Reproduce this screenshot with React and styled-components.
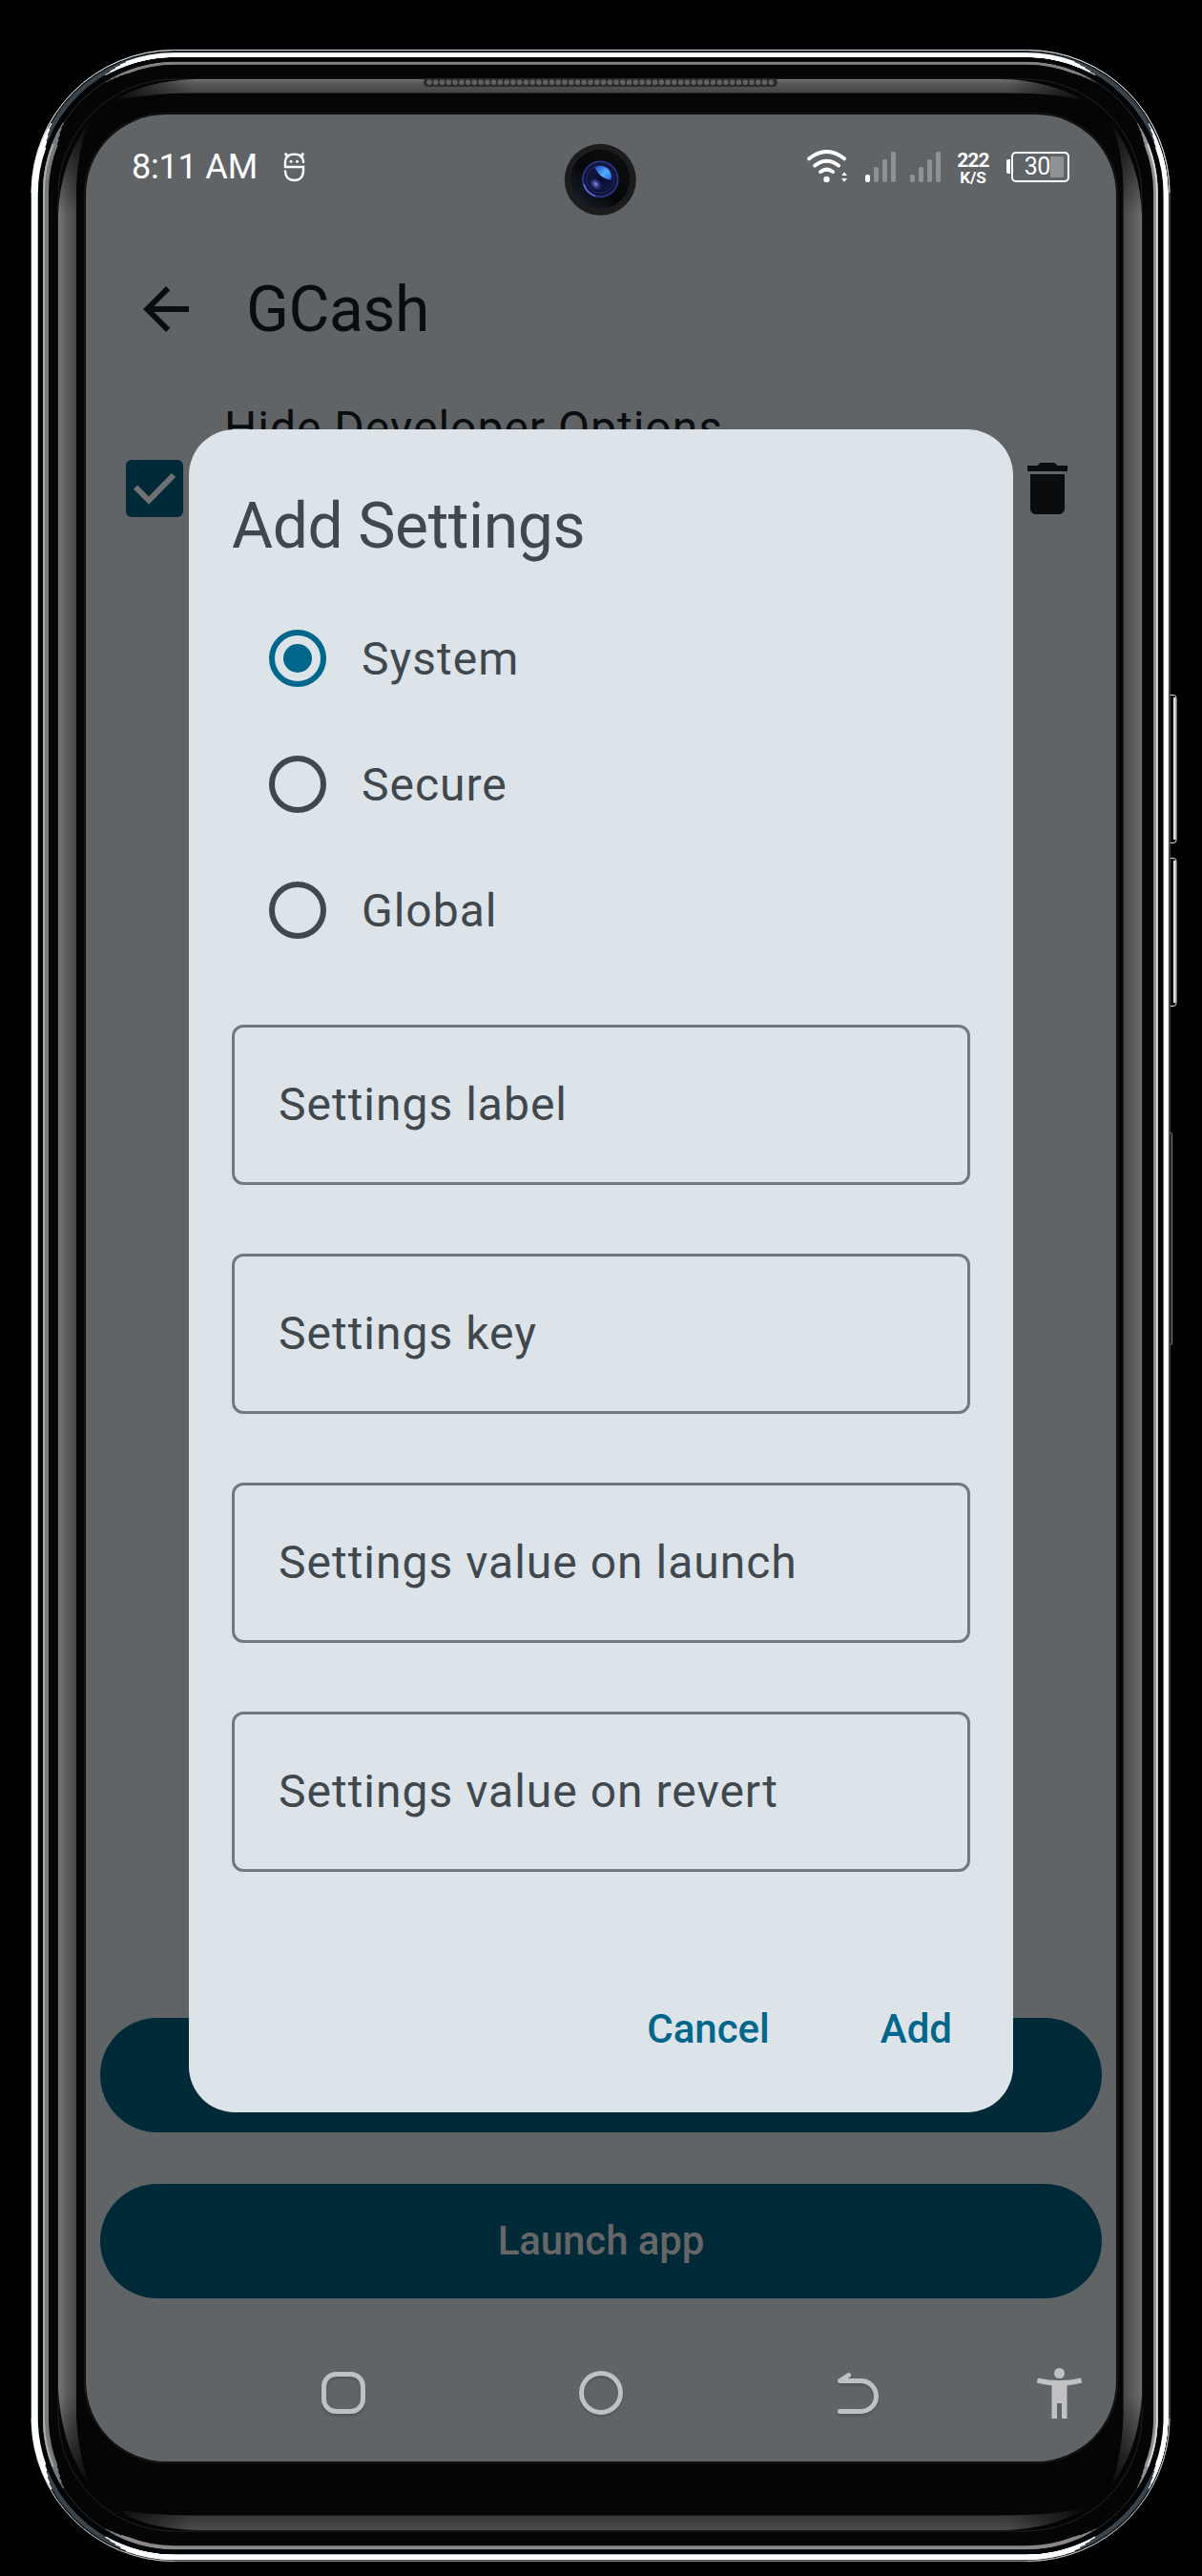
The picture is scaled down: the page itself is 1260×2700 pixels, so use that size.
import React, { useState } from "react";
import styled, { createGlobalStyle } from "styled-components";

const color = {
  screen: "#606467",
  ink: "#0a0c0e",
  dialog: "#dce3e9",
  text: "#41484d",
  outline: "#71787e",
  primary: "#00668b",
  primaryDim: "#002a38",
  onPrimaryDim: "#666666",
  nav: "#c0c1c3",
};

const GlobalStyle = createGlobalStyle`
  body { margin: 0; background: #000; }
  *, *::before, *::after { box-sizing: border-box; }
  svg { display: block; flex: none; }
  button { border: 0; margin: 0; padding: 0; background: none; font: inherit; color: inherit; letter-spacing: inherit; }
`;

const Page = styled.main`
  width: 1260px;
  height: 2700px;
  background: #000;
  overflow: hidden;
  font-family: Roboto, "Liberation Sans", sans-serif;
`;

const Phone = styled.div`
  position: relative;
  height: 100%;
  padding: 120px 90px;
`;

const Hardware = styled.svg`
  position: absolute;
  inset: 0;
`;

const Screen = styled.section`
  position: relative;
  display: flex;
  flex-direction: column;
  height: 2460px;
  border-radius: 84px;
  background: ${color.screen};
  overflow: hidden;
`;

const StatusBar = styled.header`
  display: flex;
  align-items: center;
  height: 108px;
  padding: 1px 49px 0 48px;
  color: #fff;
`;

const Clock = styled.span`
  margin: 1px 27px 0 0;
  font-size: 36px;
  line-height: 42px;
  letter-spacing: -0.2px;
`;

const StatusIcons = styled.div`
  display: flex;
  align-items: center;
  margin-left: auto;
`;

const Signals = styled.div`
  display: flex;
  gap: 15px;
  margin: 0 17px 0 18px;
`;

const NetSpeed = styled.div`
  display: flex;
  flex-direction: column;
  align-items: center;
  width: 34px;
  margin: 4px 18px 0 0;
  font-weight: 700;
`;

const SpeedValue = styled.span`
  font-size: 21px;
  line-height: 18px;
  letter-spacing: -0.8px;
`;

const SpeedUnit = styled.span`
  font-size: 17px;
  line-height: 18px;
`;

const Battery = styled.div`
  display: flex;
  align-items: center;
  gap: 1px;
`;

const BatteryNub = styled.span`
  width: 4px;
  height: 15px;
  border-radius: 2px 0 0 2px;
  background: #fff;
`;

const BatteryBody = styled.span`
  display: flex;
  align-items: center;
  justify-content: flex-end;
  width: 61px;
  height: 32px;
  padding-right: 4px;
  border: 2px solid #fff;
  border-radius: 5px;
  font-size: 25px;
  line-height: 28px;
  letter-spacing: -0.4px;
`;

const BatteryEmpty = styled.span`
  width: 14px;
  height: 22px;
  background: #8f9193;
  border-radius: 0 2px 2px 0;
`;

const Camera = styled.svg`
  position: absolute;
  left: 501px;
  top: 30px;
`;

const TopBar = styled.div`
  display: flex;
  align-items: center;
  gap: 48px;
  height: 192px;
  padding-left: 48px;
  color: ${color.ink};
`;

const TopTitle = styled.h1`
  margin: 1px 0 0;
  font-size: 66px;
  font-weight: 400;
  line-height: 84px;
  letter-spacing: -0.5px;
`;

const SettingRow = styled.div`
  display: flex;
  align-items: center;
  height: 184px;
  padding: 0 36px 0 42px;
  color: ${color.ink};
`;

const CheckBox = styled.span`
  display: grid;
  place-items: center;
  width: 60px;
  height: 60px;
  border-radius: 6px;
  background: ${color.primaryDim};
`;

const SettingLabel = styled.span`
  flex: 1;
  align-self: flex-start;
  margin: -7px 0 0 43px;
  font-size: 48px;
  line-height: 72px;
  letter-spacing: 1px;
`;

const Actions = styled.div`
  display: flex;
  flex-direction: column;
  gap: 54px;
  margin-top: auto;
  padding: 0 15px;
`;

const FilledButton = styled.button`
  height: 120px;
  border-radius: 60px;
  background: ${color.primaryDim};
  color: ${color.onPrimaryDim};
  font-size: 42px;
  font-weight: 500;
  line-height: 60px;
  letter-spacing: -0.1px;
`;

const NavBar = styled.nav`
  display: flex;
  align-items: center;
  height: 144px;
  margin: 27px 0 0;
  padding: 0 30px 0 239px;
  svg.soft { filter: drop-shadow(0 2px 1px rgba(0, 0, 0, 0.16)); }
`;

const NavSpace = styled.span`
  flex: 0 0 ${(p) => p.$w}px;
`;

const Dialog = styled.div`
  position: absolute;
  left: 108px;
  top: 330px;
  display: flex;
  flex-direction: column;
  width: 864px;
  height: 1764px;
  padding: 45px;
  border-radius: 48px;
  background: ${color.dialog};
  color: ${color.text};
`;

const DialogTitle = styled.h2`
  margin: 12px 0 0;
  font-size: 66px;
  font-weight: 400;
  line-height: 90px;
  letter-spacing: -0.4px;
`;

const RadioGroup = styled.div`
  display: flex;
  flex-direction: column;
  margin: 27px 0 54px;
  padding-left: 39px;
`;

const RadioRow = styled.button`
  display: flex;
  align-items: center;
  gap: 37px;
  height: 132px;
  font-size: 48px;
  line-height: 72px;
  letter-spacing: 1px;
  text-align: left;
`;

const RadioName = styled.span`
  margin-top: 2px;
`;

const RadioRing = styled.span`
  display: grid;
  place-items: center;
  width: 60px;
  height: 60px;
  border: 6px solid ${(p) => (p.$on ? color.primary : color.text)};
  border-radius: 50%;
  &::after {
    content: "";
    width: 30px;
    height: 30px;
    border-radius: 50%;
    background: ${(p) => (p.$on ? color.primary : "transparent")};
  }
`;

const Fields = styled.div`
  display: flex;
  flex-direction: column;
  gap: 72px;
`;

const Field = styled.div`
  display: flex;
  align-items: center;
  height: 168px;
  padding: 0 46px;
  border: 3px solid ${color.outline};
  border-radius: 12px;
  font-size: 48px;
  line-height: 72px;
  letter-spacing: 1px;
`;

const DialogActions = styled.div`
  display: flex;
  justify-content: flex-end;
  gap: 116px;
  margin-top: auto;
  padding: 0 19px 12px 0;
  color: ${color.primary};
  font-size: 42px;
  font-weight: 500;
  line-height: 60px;
`;

const rad = (d) => (d * Math.PI) / 180;

/* One straight side of a rounded rectangle that carries on `edge` degrees round both corners. */
function sidePath(side, { l, t, r, b, rad: k }, edge) {
  const c = k * Math.cos(rad(edge));
  const s = k * Math.sin(rad(edge));
  const arc = (x, y, sweep) => `A${k} ${k} 0 0 ${sweep} ${x} ${y}`;
  if (side === "left")
    return `M${l + k - c} ${b - k + s}${arc(l, b - k, 1)}V${t + k}${arc(l + k - c, t + k - s, 1)}`;
  if (side === "right")
    return `M${r - k + c} ${b - k + s}${arc(r, b - k, 0)}V${t + k}${arc(r - k + c, t + k - s, 0)}`;
  if (side === "top")
    return `M${l + k - s} ${t + k - c}${arc(l + k, t, 1)}H${r - k}${arc(r - k + s, t + k - c, 1)}`;
  return `M${l + k - s} ${b - k + c}${arc(l + k, b, 0)}H${r - k}${arc(r - k + s, b - k + c, 0)}`;
}

/* A highlight whose ends thin out towards the corners, against the outer (+1) or inner (-1) side. */
function Highlight({ side, box, width, stroke, reach, lean }) {
  const steps = [1, 0.8, 0.6, 0.4, 0.22];
  return steps.map((f, i) => {
    const d = (lean * (width * (1 - f))) / 2;
    const shifted = { l: box.l - d, t: box.t - d, r: box.r + d, b: box.b + d, rad: box.rad + d };
    return (
      <path key={f} d={sidePath(side, shifted, reach - 10 + i * 2.5)} stroke={stroke} strokeWidth={width * f} />
    );
  });
}

const chrome = { l: 36.5, t: 57.5, r: 1222, b: 2680.5, rad: 146 };
const inner = { l: 48, t: 66.5, r: 1211.3, b: 2670, rad: 135 };

function Frame() {
  return (
    <Hardware width="1260" height="2700" viewBox="0 0 1260 2700" fill="none">
      <defs>
        <linearGradient id="bandL"><stop stopColor="#777" /><stop offset=".25" stopColor="#5e5e5e" /><stop offset="1" stopColor="#282828" /></linearGradient>
        <linearGradient id="bandR"><stop stopColor="#303030" /><stop offset="1" stopColor="#6c6c6c" /></linearGradient>
        <linearGradient id="bandT" x2="0" y2="1"><stop stopColor="#707070" /><stop offset=".2" stopColor="#585858" /><stop offset="1" stopColor="#303030" /></linearGradient>
        <linearGradient id="bandB" x2="0" y2="1"><stop stopColor="#1b1b1b" /><stop offset=".3" stopColor="#353535" /><stop offset="1" stopColor="#4b4b4b" /></linearGradient>
        <linearGradient id="fadeV" gradientUnits="userSpaceOnUse" x1="0" y1="110" x2="0" y2="2625">
          <stop stopColor="#000" /><stop offset=".045" stopColor="#fff" /><stop offset=".955" stopColor="#fff" /><stop offset="1" stopColor="#000" />
        </linearGradient>
        <linearGradient id="fadeH" gradientUnits="userSpaceOnUse" x1="105" y1="0" x2="1153" y2="0">
          <stop stopColor="#000" /><stop offset=".09" stopColor="#fff" /><stop offset=".91" stopColor="#fff" /><stop offset="1" stopColor="#000" />
        </linearGradient>
        <mask id="maskV" maskUnits="userSpaceOnUse" x="0" y="0" width="1260" height="2700"><rect width="1260" height="2700" fill="url(#fadeV)" /></mask>
        <mask id="maskH" maskUnits="userSpaceOnUse" x="0" y="0" width="1260" height="2700"><rect width="1260" height="2700" fill="url(#fadeH)" /></mask>
      </defs>

      {[[728, 155], [899, 155]].map(([y, h]) => (
        <g key={y}>
          <rect x="1221" y={y + 0.5} width="12" height={h} rx="3" fill="#080808" stroke="#d8d8d8" />
          <rect x="1230" y={y + 3} width="2.600" height={h - 6} fill="#dedede" />
        </g>
      ))}
      <rect x="1221" y="1187.500" width="7.500" height="222" rx="1" fill="#050505" stroke="#8d8585" />

      <rect x="32.500" y="52" width="1194" height="2633" rx="150" fill="#050505" />
      <rect x="37" y="56.500" width="1185" height="2624" rx="145.500" stroke="#3a434a" strokeWidth="5" />
      <rect x="34.500" y="54" width="1190" height="2629" rx="148" stroke="#1a2024" />
      <rect x="33" y="52.500" width="1193" height="2632" rx="149.500" stroke="#7a8388" />
      <path d="M33 202A149.500 149.500 0 0 1 182.500 52.500H1076.500A149.500 149.500 0 0 1 1226 202" stroke="#dfe2e4" />
      <path d="M33 2535A149.500 149.500 0 0 0 182.500 2684.500M1076.500 2684.500A149.500 149.500 0 0 0 1226 2535" stroke="#b4babd" />
      <rect x="42" y="61.500" width="1175" height="2614" rx="141" stroke="#010508" strokeWidth="5" />
      <Highlight side="left" box={chrome} width={6.5} stroke="#fff" reach={30} lean={1} />
      <Highlight side="right" box={chrome} width={4.8} stroke="#fff" reach={30} lean={1} />
      <Highlight side="top" box={chrome} width={4.4} stroke="#fff" reach={30} lean={-1} />
      <Highlight side="bottom" box={chrome} width={5.4} stroke="#fff" reach={30} lean={-1} />

      <rect x="45.500" y="65" width="1168" height="2607" rx="137" stroke="#2b2d2e" />
      <Highlight side="left" box={inner} width={6} stroke="#767a7b" reach={32} lean={1} />
      <path d={sidePath("left", { ...inner, l: 46 }, 22)} stroke="#a8abac" strokeWidth="2" />
      <Highlight side="right" box={inner} width={4.5} stroke="#948f90" reach={32} lean={1} />
      <path d={sidePath("right", { ...inner, r: 1212.8 }, 22)} stroke="#d8dadb" strokeWidth="1.800" />
      <Highlight side="top" box={inner} width={2.6} stroke="#858283" reach={32} lean={1} />
      <Highlight side="bottom" box={inner} width={3.6} stroke="#8b8788" reach={32} lean={1} />

      <rect x="61" y="83" width="1136" height="2570" rx="122" stroke="#222" />
      <g mask="url(#maskV)">
        <path fill="url(#bandL)" d="M93 128Q62 172 61 227V2503Q64 2565 93 2603Q81 2568 80 2530V197Q81 160 93 128Z" />
        <path fill="url(#bandR)" d="M1165 128Q1196 172 1197 227V2510Q1194 2567 1165 2605Q1177 2570 1177.500 2530V197Q1177 160 1165 128Z" />
      </g>
      <g mask="url(#maskH)">
        <path fill="url(#bandT)" d="M119 106Q150 85 204 83H1050Q1100 84 1138 106Q1105 97 1050 97.500H200Q152 98 119 106Z" />
        <path fill="url(#bandB)" d="M123 2630Q150 2651 210 2652H1050Q1105 2651 1136 2629Q1105 2636 1050 2636.500H200Q152 2636 123 2630Z" />
      </g>
      <rect x="88.500" y="118.500" width="1083" height="2463" rx="86" stroke="#171717" strokeWidth="1.500" />

      <rect x="444" y="82" width="371" height="9" rx="4.500" fill="#2b2b2b" />
      {Array.from({ length: 54 }, (_, i) => (
        <circle key={i} cx={450 + i * 6.76} cy="86.200" r="2.700" fill="#626262" />
      ))}
    </Hardware>
  );
}

function FrontCamera() {
  return (
    <Camera width="76" height="76" viewBox="0 0 76 76" fill="none">
      <defs>
        <radialGradient id="lens"><stop stopColor="#080a2c" /><stop offset=".6" stopColor="#11143e" /><stop offset=".82" stopColor="#0a0d26" /><stop offset="1" stopColor="#232c6c" /></radialGradient>
        <linearGradient id="barrel" x1="1" y1="0" x2="0" y2="1"><stop stopColor="#101010" /><stop offset=".55" stopColor="#06070a" /><stop offset="1" stopColor="#1b2530" /></linearGradient>
        <linearGradient id="glint" x1="0" y1="0" x2="1" y2="1"><stop stopColor="#2a43bd" /><stop offset=".55" stopColor="#4cadff" /><stop offset="1" stopColor="#2e66d6" /></linearGradient>
        <radialGradient id="low"><stop stopColor="#8d93ea" /><stop offset="1" stopColor="#2b2f86" stopOpacity="0" /></radialGradient>
      </defs>
      <circle cx="38.300" cy="38.300" r="37.500" fill="#1c1c1d" />
      <circle cx="38.300" cy="37.800" r="31" fill="url(#barrel)" />
      <circle cx="38.300" cy="37.800" r="18.600" fill="url(#lens)" stroke="#303c91" strokeWidth="1.200" />
      <circle cx="38.300" cy="37.800" r="14.500" stroke="#2b3588" strokeWidth=".9" />
      <path d="M21 43A18.400 18.400 0 0 0 33 55.500" stroke="#5664d8" strokeWidth="1.800" />
      <ellipse cx="33.500" cy="43" rx="8" ry="6" transform="rotate(45 33.5 43)" fill="url(#low)" />
      <path d="M32 25.500Q42 21.500 48 29Q51 34 49.500 38.500Q43 38 38 33.500Q35 30 32 25.500Z" fill="url(#glint)" />
    </Camera>
  );
}

function BotIcon() {
  return (
    <svg width="24" height="32" viewBox="0 0 24 32" fill="none" stroke="#fff" strokeWidth="2.400" strokeLinecap="round">
      <path d="M2.600 2.600 4.600 5M20.400 2.600 18.400 5" strokeWidth="3" />
      <path d="M21 11V10Q20.500 2.600 11.500 2.600T2 10V16H21V20Q20.500 30 11.500 30T2 20.500" />
      <circle cx="8" cy="10.300" r="1.500" fill="#fff" stroke="none" />
      <circle cx="14.500" cy="10.300" r="1.500" fill="#fff" stroke="none" />
    </svg>
  );
}

function WifiIcon() {
  return (
    <svg width="43" height="35" viewBox="0 0 43 35" fill="none" stroke="#fff" strokeWidth="4" strokeLinecap="round">
      <path d="M2.200 9.300Q20.500 -5.200 39 9.300M8.200 16.500Q20.500 7 33 16.500M14.200 23Q20.500 18.300 27 23" />
      <circle cx="20.500" cy="31" r="3.200" fill="#fff" stroke="none" />
      <path d="M36.200 27 39 23.600 42 27ZM36.200 30 39 33.800 42 30Z" fill="#fff" stroke="none" />
    </svg>
  );
}

function SignalIcon({ level }) {
  return (
    <svg width="32" height="32" viewBox="0 0 32 32">
      {[8, 16, 24, 32].map((h, i) => (
        <rect key={h} x={i * 9} y={32 - h} width="5" height={h} rx="2" fill={i < level ? "#fff" : "#8f9294"} />
      ))}
    </svg>
  );
}

const OPTIONS = ["System", "Secure", "Global"];
const FIELDS = ["Settings label", "Settings key", "Settings value on launch", "Settings value on revert"];

export default function App() {
  const [scope, setScope] = useState("System");
  return (
    <Page>
      <GlobalStyle />
      <Phone>
        <Frame />
        <Screen>
          <StatusBar>
            <Clock>8:11 AM</Clock>
            <BotIcon />
            <StatusIcons>
              <WifiIcon />
              <Signals>
                <SignalIcon level={1} />
                <SignalIcon level={0} />
              </Signals>
              <NetSpeed>
                <SpeedValue>222</SpeedValue>
                <SpeedUnit>K/S</SpeedUnit>
              </NetSpeed>
              <Battery>
                <BatteryNub />
                <BatteryBody>
                  30
                  <BatteryEmpty />
                </BatteryBody>
              </Battery>
            </StatusIcons>
          </StatusBar>

          <TopBar>
            <svg width="72" height="72" viewBox="0 0 24 24" fill={color.ink}>
              <path d="M20 11H7.830l5.590-5.590L12 4l-8 8 8 8 1.410-1.410L7.830 13H20v-2z" />
            </svg>
            <TopTitle>GCash</TopTitle>
          </TopBar>

          <SettingRow>
            <CheckBox>
              <svg width="60" height="60" viewBox="0 0 60 60" fill="none" stroke="#707172" strokeWidth="6">
                <path d="M10 28.500 24 42.500 50 16" />
              </svg>
            </CheckBox>
            <SettingLabel>Hide Developer Options</SettingLabel>
            <svg width="72" height="72" viewBox="0 0 24 24" fill={color.ink}>
              <path d="M6 19c0 1.100.9 2 2 2h8c1.100 0 2-.9 2-2V7H6v12zM19 4h-3.500l-1-1h-5l-1 1H5v2h14V4z" />
            </svg>
          </SettingRow>

          <Actions>
            <FilledButton aria-label="Add" />
            <FilledButton>Launch app</FilledButton>
          </Actions>

          <NavBar>
            <svg className="soft" width="60" height="60" viewBox="0 0 60 60" fill="none" stroke={color.nav} strokeWidth="5">
              <rect x="10.500" y="10.500" width="41" height="39" rx="13" />
            </svg>
            <NavSpace $w={211} />
            <svg className="soft" width="60" height="60" viewBox="0 0 60 60" fill="none" stroke={color.nav} strokeWidth="5">
              <circle cx="30" cy="30" r="20.500" />
            </svg>
            <NavSpace $w={209} />
            <svg className="soft" width="60" height="60" viewBox="0 0 60 60" fill="none" stroke={color.nav} strokeWidth="5" strokeLinecap="round" strokeLinejoin="round">
              <path d="M20.500 11.500 11.500 17.500H33.500A16 16 0 0 1 33.500 49.500H11.500" />
            </svg>
            <NavSpace $w={151} />
            <svg width="60" height="60" viewBox="0 0 60 60" fill={color.nav}>
              <circle cx="30.500" cy="9.500" r="5.500" />
              <path d="M8 14.500Q30.500 19.500 53 14.500L54.200 19.500Q46 21.500 38.500 22.300V57H33V41H28V57H22.500V22.300Q15 21.500 6.800 19.500Z" />
            </svg>
          </NavBar>

          <Dialog role="dialog" aria-label="Add Settings">
            <DialogTitle>Add Settings</DialogTitle>
            <RadioGroup>
              {OPTIONS.map((name) => (
                <RadioRow key={name} onClick={() => setScope(name)}>
                  <RadioRing $on={scope === name} />
                  <RadioName>{name}</RadioName>
                </RadioRow>
              ))}
            </RadioGroup>
            <Fields>
              {FIELDS.map((name) => (
                <Field key={name}>{name}</Field>
              ))}
            </Fields>
            <DialogActions>
              <button>Cancel</button>
              <button>Add</button>
            </DialogActions>
          </Dialog>

          <FrontCamera />
        </Screen>
      </Phone>
    </Page>
  );
}
